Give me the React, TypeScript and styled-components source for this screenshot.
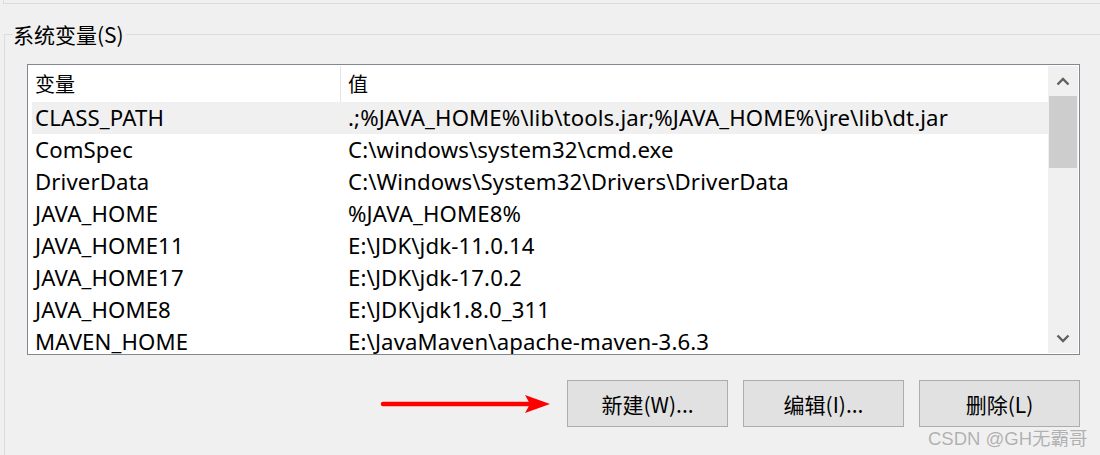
import React from "react";
import styled, { createGlobalStyle } from "styled-components";

const Global = createGlobalStyle`
  html, body { margin: 0; padding: 0; }
  body {
    background: #f0f0f0;
    width: 1100px;
    height: 455px;
    overflow: hidden;
    font-family: "Noto Sans", "Noto Sans CJK SC", sans-serif;
    color: #000;
  }
`;

const Page = styled.div`
  position: relative;
  width: 1100px;
  height: 455px;
  overflow: hidden;
`;

const PrevGroupEdge = styled.div`
  margin-left: 3px;
  height: 3px;
  border-left: 1px solid #dcdcdc;
  border-bottom: 1px solid #dcdcdc;
`;

const Group = styled.fieldset`
  margin: 17px 0 0 4px;
  padding: 0;
  min-width: 0;
  height: 440px;
  border: 1px solid #dcdcdc;
  border-right: none;
  border-bottom: none;
`;

const Legend = styled.legend`
  margin-left: 8px;
  padding: 0 2px 0 0;
  font-family: "Noto Sans CJK SC", sans-serif;
  font-size: 21px;
  line-height: 26px;
  color: #000;
`;

const ListBox = styled.div`
  margin: 17px 0 0 22px;
  width: 1051px;
  height: 289px;
  border: 1px solid #828790;
  background: #fff;
  display: flex;
  overflow: hidden;
`;

const TableArea = styled.div`
  flex: 1;
  padding-left: 4px;
  padding-top: 1px;
  overflow: hidden;
`;

const HeaderRow = styled.div`
  display: grid;
  grid-template-columns: 309px 1fr;
  height: 36px;
  align-items: center;
`;

const HeaderCell = styled.div<{ $first?: boolean }>`
  height: 100%;
  display: flex;
  align-items: center;
  padding-left: ${(p) => (p.$first ? "3px" : "7px")};
  padding-bottom: 2px;
  box-sizing: border-box;
  border-right: ${(p) => (p.$first ? "1px solid #e5e5e5" : "none")};
  font-family: "Noto Sans CJK SC", sans-serif;
  font-size: 20px;
`;

const Row = styled.div<{ $selected?: boolean }>`
  display: grid;
  grid-template-columns: 309px 1fr;
  height: 32px;
  align-items: center;
  background: ${(p) => (p.$selected ? "#f0f0f0" : "transparent")};
  font-size: 22.2px;
  letter-spacing: 0.12px;
  line-height: 32px;
  white-space: nowrap;
`;

const Cell = styled.div<{ $first?: boolean }>`
  padding-left: ${(p) => (p.$first ? "3px" : "7px")};
`;

const ScrollBar = styled.div`
  width: 30px;
  margin: 1px 1px 1px 0;
  background: #f0f0f0;
  display: flex;
  flex-direction: column;
  align-items: center;
`;

const ScrollArrow = styled.div`
  height: 30px;
  width: 100%;
  display: flex;
  align-items: center;
  justify-content: center;
`;

const Thumb = styled.div`
  width: 28px;
  height: 72px;
  background: #cdcdcd;
`;

const Track = styled.div`
  flex: 1;
`;

const ButtonRow = styled.div`
  margin: 25px 0 0 22px;
  width: 1053px;
  display: flex;
  justify-content: flex-end;
  align-items: center;
  gap: 15px;
`;

const Button = styled.button`
  width: 161px;
  height: 47px;
  background: #e1e1e1;
  border: 1px solid #adadad;
  font-family: "Noto Sans CJK SC", sans-serif;
  font-size: 21px;
  color: #000;
  padding: 0;
  cursor: default;
`;

const Watermark = styled.div`
  position: absolute;
  left: 928px;
  top: 424px;
  font-family: "Liberation Sans", "Noto Sans CJK SC", sans-serif;
  font-size: 18.5px;
  color: #b0b0b0;
  text-shadow: 0 0 1px #fff;
  white-space: nowrap;
`;

const rows: [string, string][] = [
  ["CLASS_PATH", ".;%JAVA_HOME%\\lib\\tools.jar;%JAVA_HOME%\\jre\\lib\\dt.jar"],
  ["ComSpec", "C:\\windows\\system32\\cmd.exe"],
  ["DriverData", "C:\\Windows\\System32\\Drivers\\DriverData"],
  ["JAVA_HOME", "%JAVA_HOME8%"],
  ["JAVA_HOME11", "E:\\JDK\\jdk-11.0.14"],
  ["JAVA_HOME17", "E:\\JDK\\jdk-17.0.2"],
  ["JAVA_HOME8", "E:\\JDK\\jdk1.8.0_311"],
  ["MAVEN_HOME", "E:\\JavaMaven\\apache-maven-3.6.3"],
];

const Chevron = ({ up }: { up?: boolean }) => (
  <svg width="14" height="9" viewBox="0 0 14 9">
    <path
      d={up ? "M1.5 7.5 L7 2 L12.5 7.5" : "M1.5 1.5 L7 7 L12.5 1.5"}
      fill="none"
      stroke="#606060"
      strokeWidth="2.4"
    />
  </svg>
);

const Arrow = () => (
  <svg width="172" height="20" viewBox="0 0 172 20">
    <line x1="3" y1="10" x2="150" y2="10" stroke="#ff0000" strokeWidth="4.5" strokeLinecap="round" />
    <path d="M145 1 L170 10 L145 19 L150 10 Z" fill="#ff0000" />
  </svg>
);

export default function App() {
  return (
    <Page>
      <Global />
      <PrevGroupEdge />
      <Group>
        <Legend>系统变量(S)</Legend>
        <ListBox>
          <TableArea>
            <HeaderRow>
              <HeaderCell $first>变量</HeaderCell>
              <HeaderCell>值</HeaderCell>
            </HeaderRow>
            {rows.map(([k, v], i) => (
              <Row key={k} $selected={i === 0}>
                <Cell $first>{k}</Cell>
                <Cell>{v}</Cell>
              </Row>
            ))}
          </TableArea>
          <ScrollBar>
            <ScrollArrow>
              <Chevron up />
            </ScrollArrow>
            <Thumb />
            <Track />
            <ScrollArrow>
              <Chevron />
            </ScrollArrow>
          </ScrollBar>
        </ListBox>
        <ButtonRow>
          <Arrow />
          <Button>新建(W)...</Button>
          <Button>编辑(I)...</Button>
          <Button>删除(L)</Button>
        </ButtonRow>
      </Group>
      <Watermark>CSDN @GH无霸哥</Watermark>
    </Page>
  );
}
